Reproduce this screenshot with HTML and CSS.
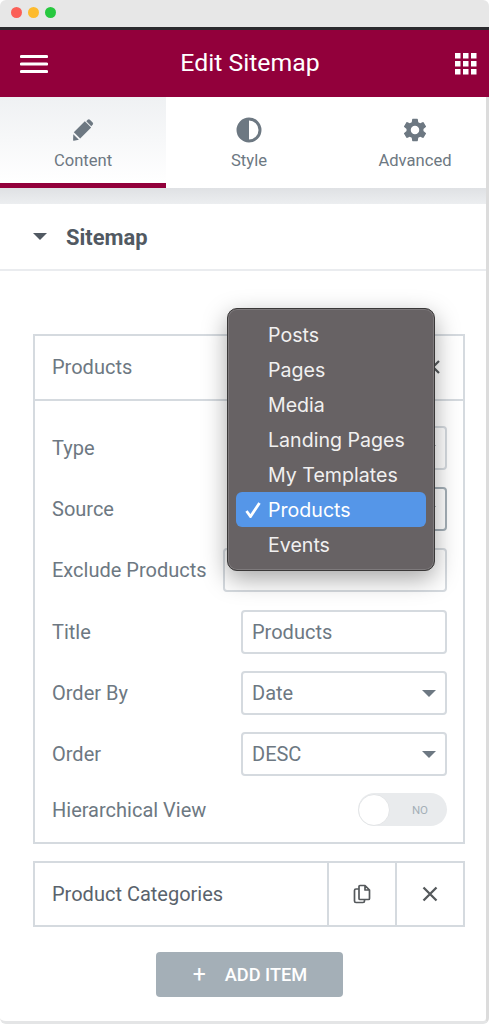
FILE: index.html
```html
<!DOCTYPE html>
<html lang="en">
<head>
    <meta charset="UTF-8">
    <meta name="viewport" content="width=device-width, initial-scale=1.0">
    <title>Edit Sitemap</title>
    <link rel="stylesheet" href="styles.css">
</head>
<body>
    <div class="window">
        <div class="titlebar">
            <span class="dot dot-red"></span>
            <span class="dot dot-yellow"></span>
            <span class="dot dot-green"></span>
        </div>

        <header class="topbar">
            <svg viewBox="0 0 28 20" width="28" height="20"><path d="M1.5 2.5h25M1.5 10h25M1.5 17.5h25" stroke="#fff" stroke-width="3.2" stroke-linecap="round"/></svg>
            <h1>Edit Sitemap</h1>
            <svg viewBox="0 0 22 22" width="22" height="22" fill="#fff">
                <rect x="0" y="0" width="5.5" height="5.5"/><rect x="8" y="0" width="5.5" height="5.5"/><rect x="16" y="0" width="5.5" height="5.5"/>
                <rect x="0" y="8" width="5.5" height="5.5"/><rect x="8" y="8" width="5.5" height="5.5"/><rect x="16" y="8" width="5.5" height="5.5"/>
                <rect x="0" y="16" width="5.5" height="5.5"/><rect x="8" y="16" width="5.5" height="5.5"/><rect x="16" y="16" width="5.5" height="5.5"/>
            </svg>
        </header>

        <div class="content">
            <nav class="tabs">
                <div class="tab active">
                    <svg viewBox="0 0 24 26" width="22" height="26" fill="#6d7882">
                        <path d="M15.6 3.4l1.5-1.5a1.8 1.8 0 0 1 2.5 0l2.9 2.9a1.8 1.8 0 0 1 0 2.5l-1.500 1.500z"/>
                        <path d="M14 3.500l6.900 6.900-12 12-6.900-6.900z"/>
                        <path d="M1.400 17.500l6.100 6.100-5.500 1.200a.7.7 0 0 1-.8-.8z"/>
                    </svg>
                    <span>Content</span>
                </div>
                <div class="tab">
                    <svg viewBox="0 0 26 26" width="26" height="26"><circle cx="13" cy="13" r="11" fill="none" stroke="#6d7882" stroke-width="3"/><path d="M13 2a11 11 0 0 0 0 22z" fill="#6d7882"/></svg>
                    <span>Style</span>
                </div>
                <div class="tab">
                    <svg viewBox="1 1 22 22" width="26" height="26" fill="#6d7882"><path d="M19.14 12.94c.04-.3.06-.61.06-.94 0-.32-.02-.64-.07-.94l2.03-1.58a.49.49 0 0 0 .12-.61l-1.92-3.32a.488.488 0 0 0-.59-.22l-2.39.96c-.5-.38-1.03-.7-1.62-.94l-.36-2.54a.484.484 0 0 0-.48-.41h-3.84c-.24 0-.43.17-.47.41l-.36 2.54c-.59.24-1.13.57-1.62.94l-2.39-.96c-.22-.08-.47 0-.59.22L2.74 8.87c-.12.21-.08.47.12.61l2.03 1.58c-.05.3-.09.63-.09.94s.02.64.07.94l-2.03 1.58a.49.49 0 0 0-.12.61l1.92 3.32c.12.22.37.29.59.22l2.39-.96c.5.38 1.03.7 1.62.94l.36 2.54c.05.24.24.41.48.41h3.84c.24 0 .44-.17.47-.41l.36-2.54c.59-.24 1.13-.56 1.62-.94l2.39.96c.22.08.47 0 .59-.22l1.92-3.32c.12-.22.07-.47-.12-.61l-2.01-1.58zM12 15.6c-1.98 0-3.6-1.62-3.6-3.6s1.62-3.6 3.6-3.6 3.6 1.62 3.6 3.6-1.62 3.6-3.6 3.6z"/></svg>
                    <span>Advanced</span>
                </div>
            </nav>

            <div class="tabs-gap"></div>

            <div class="section-head">
                <span class="caret"></span>
                <span class="section-title">Sitemap</span>
            </div>

            <section class="panel">
                <div class="repeater">
                    <div class="item-head">
                        <span>Products</span>
                        <svg viewBox="0 0 14 14" width="14" height="14"><path d="M1 1l12 12M13 1L1 13" stroke="#55595c" stroke-width="2.2"/></svg>
                    </div>
                    <div class="fields">
                        <div class="field"><label>Type</label><div class="input"><span class="select-arrow"></span></div></div>
                        <div class="field"><label>Source</label><div class="input focused"><span class="select-arrow"></span></div></div>
                        <div class="field"><label>Exclude Products</label><div class="input input-wide"></div></div>
                        <div class="field"><label>Title</label><div class="input">Products</div></div>
                        <div class="field"><label>Order By</label><div class="input">Date<span class="select-arrow"></span></div></div>
                        <div class="field"><label>Order</label><div class="input">DESC<span class="select-arrow"></span></div></div>
                        <div class="field"><label>Hierarchical View</label>
                            <div class="switch"><span class="knob"></span><span class="switch-label">NO</span></div>
                        </div>
                    </div>
                </div>

                <div class="repeater collapsed">
                    <div class="collapsed-title">Product Categories</div>
                    <div class="collapsed-btn">
                        <svg viewBox="0 0 18 20" width="18" height="20" fill="none" stroke="#55595c" stroke-width="1.7" stroke-linejoin="round"><path d="M7 1.500h5l4.500 4.500v8.500a1 1 0 0 1-1 1H7a1 1 0 0 1-1-1v-12a1 1 0 0 1 1-1zM12 1.500V6h4.500"/><path d="M6 5H3a1.500 1.500 0 0 0-1.500 1.500v10.500A1.500 1.500 0 0 0 3 18.500h7a1.500 1.500 0 0 0 1.500-1.500v-1.500"/></svg>
                    </div>
                    <div class="collapsed-btn">
                        <svg viewBox="0 0 16 16" width="16" height="16"><path d="M1.500 1.500l13 13M14.500 1.500l-13 13" stroke="#55595c" stroke-width="2.3"/></svg>
                    </div>
                </div>

                <div class="add-row">
                    <button class="add-btn"><span class="plus">+</span>ADD ITEM</button>
                </div>
            </section>
        </div>

        <div class="popup">
            <div class="popup-item">Posts</div>
            <div class="popup-item">Pages</div>
            <div class="popup-item">Media</div>
            <div class="popup-item">Landing Pages</div>
            <div class="popup-item">My Templates</div>
            <div class="popup-item selected">
                <svg class="check" viewBox="0 0 16 16" width="16" height="16"><path d="M1.500 9l4 5.500L14.500 1" fill="none" stroke="#fff" stroke-width="2.8"/></svg>
                Products
            </div>
            <div class="popup-item">Events</div>
        </div>
    </div>
</body>
</html>
```

FILE: styles.css
```css
* {
    box-sizing: border-box;
}
html, body {
    margin: 0;
    padding: 0;
    background-color: #fff;
}
body {
    font-family: Roboto, "Liberation Sans", sans-serif;
    color: #6d7882;
}
.window {
    position: relative;
    width: 489px;
    height: 1024px;
    overflow: hidden;
    background-color: #fff;
}
.titlebar {
    display: flex;
    align-items: center;
    gap: 6px;
    height: 30px;
    padding: 0 0 2px 11px;
    background-color: #e7e7e7;
    border-bottom: 3px solid #2b2a2e;
    border-radius: 6px 6px 0 0;
}
.dot {
    width: 11px;
    height: 11px;
    border-radius: 50%;
}
.dot-red { background-color: #fb5f57; }
.dot-yellow { background-color: #fdbb2e; }
.dot-green { background-color: #27c83f; }
.topbar {
    display: flex;
    align-items: center;
    justify-content: space-between;
    height: 67px;
    padding: 0 12px 0 20px;
    background-color: #92003b;
    color: #fff;
}
.topbar h1 {
    margin: 0 3px 2px 0;
    font-size: 24.8px;
    font-weight: 400;
}
.content {
    height: 927px;
    overflow: hidden;
    border-right: 3px solid #dcdcdc;
    border-bottom: 3px solid #e4e5e6;
    border-radius: 0 0 6px 6px;
}
.tabs {
    display: flex;
    height: 91px;
    background-color: #fff;
}
.tab {
    display: flex;
    flex: 0 0 166px;
    flex-direction: column;
    align-items: center;
    padding-top: 20px;
    gap: 8px;
    font-size: 16.6px;
}
.tab svg {
    display: block;
}
.tab.active {
    background: linear-gradient(#eff1f3, #fff);
    border-bottom: 5px solid #92003b;
}
.tabs-gap {
    height: 16px;
    background: linear-gradient(#dfe1e4, #eceef0);
}
.section-head {
    display: flex;
    align-items: center;
    gap: 19px;
    height: 67px;
    padding-left: 33px;
    font-size: 21.9px;
    font-weight: 700;
    color: #515962;
    border-bottom: 2px solid #eaecef;
}
.section-title {
    padding-top: 2px;
}
.caret {
    width: 0;
    height: 0;
    border-left: 7px solid transparent;
    border-right: 7px solid transparent;
    border-top: 7px solid #515962;
}
.panel {
    padding: 63px 21px 0 33px;
}
.repeater {
    border: 2px solid #d5dadf;
}
.item-head {
    display: flex;
    align-items: center;
    justify-content: space-between;
    height: 65px;
    padding: 0 23px 2px 17px;
    font-size: 20px;
    border-bottom: 2px solid #d5dadf;
}
.fields {
    display: flex;
    flex-direction: column;
    gap: 17.2px;
    padding: 25px 16px 16px 17px;
}
.field {
    display: flex;
    align-items: center;
    justify-content: space-between;
    font-size: 20px;
}
.input {
    position: relative;
    display: flex;
    align-items: center;
    width: 206px;
    height: 44px;
    padding: 0 9px;
    border: 2px solid #d5dadf;
    border-radius: 4px;
}
.input.focused {
    border-color: #a4afb7;
}
.input-wide {
    width: 224px;
}
.select-arrow {
    position: absolute;
    right: 9px;
    top: 17px;
    width: 0;
    height: 0;
    border-left: 7px solid transparent;
    border-right: 7px solid transparent;
    border-top: 7px solid #6d7882;
}
.switch {
    display: flex;
    align-items: center;
    justify-content: space-between;
    width: 89px;
    height: 33px;
    padding-right: 19px;
    border-radius: 17px;
    background-color: #e9ebed;
}
.knob {
    width: 32px;
    height: 32px;
    border-radius: 50%;
    background-color: #fff;
    border: 1px solid #e3e5e7;
}
.switch-label {
    font-size: 11.5px;
    font-weight: 400;
    color: #a4afb7;
}
.repeater.collapsed {
    display: flex;
    align-items: stretch;
    height: 66px;
    margin-top: 17px;
}
.collapsed-title {
    display: flex;
    flex: 1;
    align-items: center;
    padding-left: 17px;
    font-size: 20px;
    color: #5a636c;
}
.collapsed-btn {
    display: flex;
    align-items: center;
    justify-content: center;
    width: 68px;
    border-left: 2px solid #d5dadf;
}
.add-row {
    display: flex;
    justify-content: center;
    margin-top: 25px;
}
.add-btn {
    display: flex;
    align-items: center;
    justify-content: center;
    width: 187px;
    height: 45px;
    padding-left: 8px;
    border: none;
    border-radius: 4px;
    background-color: #a4afb7;
    color: #fff;
    font-family: inherit;
    font-size: 18.2px;
    font-weight: 500;
}
.plus {
    margin-right: 19px;
    font-size: 23px;
    font-weight: 400;
}
.popup {
    position: absolute;
    left: 227px;
    top: 308px;
    width: 208px;
    height: 263px;
    padding: 8px 8px 0 8px;
    border: 1px solid #3a3838;
    border-radius: 10px;
    background-color: #676264;
    box-shadow: inset 0 0 0 1px #7e7a7c, 0 8px 24px rgba(0, 0, 0, 0.35);
    font-family: Inter, "Liberation Sans", sans-serif;
    color: #f1f0f0;
}
.popup-item {
    position: relative;
    height: 35px;
    padding-left: 32px;
    font-size: 19.6px;
    line-height: 37px;
    border-radius: 6px;
}
.popup-item.selected {
    background-color: #5596e8;
    color: #fff;
}
.check {
    position: absolute;
    left: 9px;
    top: 10px;
}
```
